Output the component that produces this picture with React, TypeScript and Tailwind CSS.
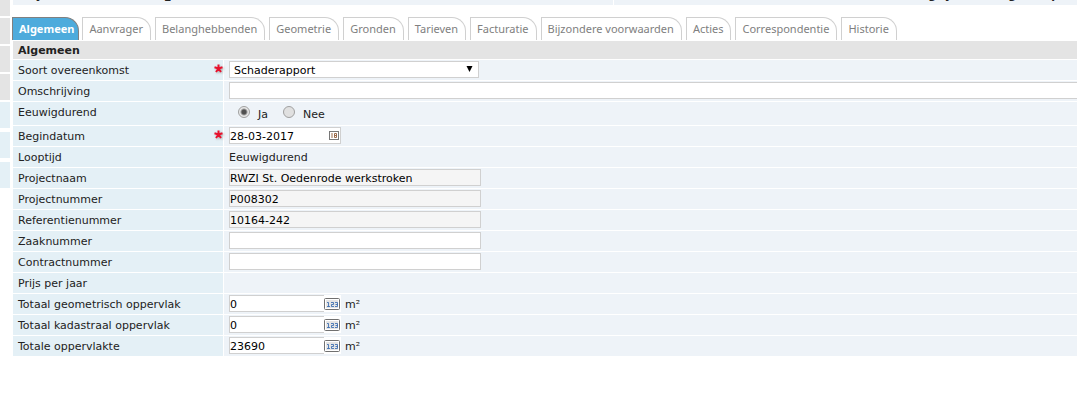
import React from "react";

const tabs = ["Algemeen", "Aanvrager", "Belanghebbenden", "Geometrie", "Gronden", "Tarieven", "Facturatie", "Bijzondere voorwaarden", "Acties", "Correspondentie", "Historie"];

const box = "block h-[17px] border border-[#d0d0d0] pt-[2px] text-black outline-none";

function Row({ label, id, required, tall, children }: { label: string; id?: string; required?: boolean; tall?: boolean; children?: React.ReactNode }) {
  return (
    <div className={`flex gap-px ${tall ? "h-[23px]" : "h-5"}`}>
      <div className="flex w-[210px] shrink-0 items-start justify-between bg-[#e4f0f6] pl-[5px] pt-1">
        {id ? <label htmlFor={id}>{label}</label> : <span>{label}</span>}
        {required && <Star />}
      </div>
      <div className="flex min-w-0 flex-1 items-start bg-[#eef3f8] pl-[5px] pt-px">{children}</div>
    </div>
  );
}

function Star() {
  return (
    <svg className="-mr-px h-[11px] w-[11px] drop-shadow-[1px_1px_1px_#aaaaaa]" viewBox="0 0 11 11" role="img" aria-label="verplicht">
      <path d="M5.500 4.500V0.500M5.500 4.500L1.500 3.300M5.500 4.500L9.500 3.300M5.500 4.500L3 8M5.500 4.500L8 8" stroke="#e8112d" strokeWidth="2" fill="none" />
    </svg>
  );
}

function NumberField({ id, value }: { id: string; value: string }) {
  return (
    <>
      <div className="flex h-[17px] w-28 items-center bg-white">
        <input id={id} defaultValue={value} className={`${box} w-[95px] border-r-0 bg-white`} />
        <button type="button" aria-label="Getal invoeren" className="mt-px h-3 w-4">
          <svg viewBox="0 0 16 12" className="h-3 w-4">
            <rect x="0.5" y="0.5" width="15" height="11" rx="1" fill="#fff" stroke="#707070" />
            <rect x="2" y="2" width="12" height="8" fill="#e4e4e4" />
            <path d="M3 4.500h1.500v4M3 8.500h3M7 4.500h2.500v2h-2v2h2.500M11 4.500h2.500v4h-2.500M11.500 6.500h2" fill="none" stroke="#2c62ac" strokeWidth="0.8" />
          </svg>
        </button>
      </div>
      <span className="ml-1 mt-[3px]">m²</span>
    </>
  );
}

export default function App() {
  return (
    <div className="flex items-start gap-[3px] overflow-hidden bg-white font-['DejaVu_Sans',Verdana,sans-serif] text-[11px] leading-[14px] text-[#222222]">
      <div className="flex w-[10px] shrink-0 flex-col">
        <div className="h-4 bg-[#e4e4e4]" />
        <div className="mt-[2px] h-[26px] bg-[#e4e4e4]" />
        <div className="mt-[2px] h-[26px] bg-[#e4e4e4]" />
        <div className="mt-[2px] h-[26px] bg-[#e4e4e4]" />
        <div className="mt-[2px] h-[26px] bg-[#e4f0f6]" />
        <div className="mt-1 h-[26px] bg-[#e4f0f6]" />
        <div className="mt-1 h-[26px] bg-[#e4f0f6]" />
      </div>
      <main className="min-w-0 flex-1">
        <div className="flex h-[5px] gap-px overflow-hidden font-bold">
          <div className="flex h-[5px] flex-[600] items-end overflow-hidden bg-[#eef3f8] pl-6">
            <span className="mb-[2px] w-32">j</span>
            <span className="mb-[3px]">_</span>
          </div>
          <div className="flex h-[5px] flex-[463] items-end justify-end overflow-hidden bg-[#eef3f8] pr-[18px]">
            <span className="mb-[2px] w-[18px]">g</span>
            <span className="mb-[2px] w-[62px]">j</span>
            <span className="mb-[2px] w-[43px]">g</span>
            <span className="mb-[2px]">p</span>
          </div>
        </div>
        <nav className="-ml-px mt-3 flex h-[23px] gap-1 whitespace-nowrap font-['Noto_Sans','DejaVu_Sans',sans-serif]">
          {tabs.map((t, i) => (
            <button key={t} type="button" className={`h-[23px] rounded-tr-[14px] border border-b-0 pl-[6px] ${i === 0 ? "-mr-px border-[#808080] bg-[#4dabdc] pr-1 font-bold text-white" : "border-[#d0d0d0] bg-white pr-[7px] text-[#808080]"}`}>
              {t}
            </button>
          ))}
        </nav>
        <h2 className="mt-px h-[18px] bg-[#e4e4e4] pl-[5px] pt-[3px] font-bold">Algemeen</h2>
        <form className="mt-px flex flex-col gap-px">
          <Row label="Soort overeenkomst" id="soort" required>
            <div className="relative">
              <select id="soort" className="block h-[17px] w-[250px] appearance-none border border-[#d0d0d0] bg-white pl-1 pt-[2px] text-black outline-none">
                <option>Schaderapport</option>
              </select>
              <svg className="pointer-events-none absolute right-[6px] top-[5px] h-[6px] w-[7px]" viewBox="0 0 7 6"><path d="M0.500 0h6L3.500 6z" /></svg>
            </div>
          </Row>
          <Row label="Omschrijving" id="omschrijving"><input id="omschrijving" className={`${box} w-full border-r-0 bg-white`} /></Row>
          <Row label="Eeuwigdurend" tall>
            <div className="flex items-start pl-[9px] pt-[3px]">
              <input id="ja" name="duur" type="radio" defaultChecked className="h-3 w-3 appearance-none rounded-full border border-[#a0a0a0] bg-[#e8e8e8] bg-[radial-gradient(circle,#505050_0_2px,transparent_4px)]" />
              <label htmlFor="ja" className="ml-2 mt-[2px]">Ja</label>
              <input id="nee" name="duur" type="radio" className="ml-[15px] h-3 w-3 appearance-none rounded-full border border-[#a0a0a0] bg-[#e0e0e0]" />
              <label htmlFor="nee" className="ml-2 mt-[2px]">Nee</label>
            </div>
          </Row>
          <Row label="Begindatum" id="begin" required>
            <div className="flex h-[17px] w-28 items-center border border-[#d0d0d0] bg-white">
              <input id="begin" defaultValue="28-03-2017" className="h-[15px] w-[99px] pt-[2px] text-black outline-none" />
              <button type="button" aria-label="Kalender" className="h-[9px] w-[10px]">
                <svg viewBox="0 0 10 9" className="h-[9px] w-[10px]"><rect x="0.500" y="0.500" width="9" height="8" fill="#fff" stroke="#777" /><path d="M3 2v5M5.500 2.500h2v4h-2zM5.500 4.500h2" fill="none" stroke="#9a6b4a" /></svg>
              </button>
            </div>
          </Row>
          <Row label="Looptijd"><span className="mt-[3px]">Eeuwigdurend</span></Row>
          <Row label="Projectnaam" id="pnaam"><input id="pnaam" readOnly defaultValue="RWZI St. Oedenrode werkstroken" className={`${box} w-[252px] bg-[#f5f5f5]`} /></Row>
          <Row label="Projectnummer" id="pnr"><input id="pnr" readOnly defaultValue="P008302" className={`${box} w-[252px] bg-[#f5f5f5]`} /></Row>
          <Row label="Referentienummer" id="ref"><input id="ref" readOnly defaultValue="10164-242" className={`${box} w-[252px] bg-[#f5f5f5]`} /></Row>
          <Row label="Zaaknummer" id="zaak"><input id="zaak" className={`${box} w-[252px] bg-white`} /></Row>
          <Row label="Contractnummer" id="contract"><input id="contract" className={`${box} w-[252px] bg-white`} /></Row>
          <Row label="Prijs per jaar" />
          <Row label="Totaal geometrisch oppervlak" id="geo"><NumberField id="geo" value="0" /></Row>
          <Row label="Totaal kadastraal oppervlak" id="kad"><NumberField id="kad" value="0" /></Row>
          <Row label="Totale oppervlakte" id="tot"><NumberField id="tot" value="23690" /></Row>
        </form>
      </main>
    </div>
  );
}
